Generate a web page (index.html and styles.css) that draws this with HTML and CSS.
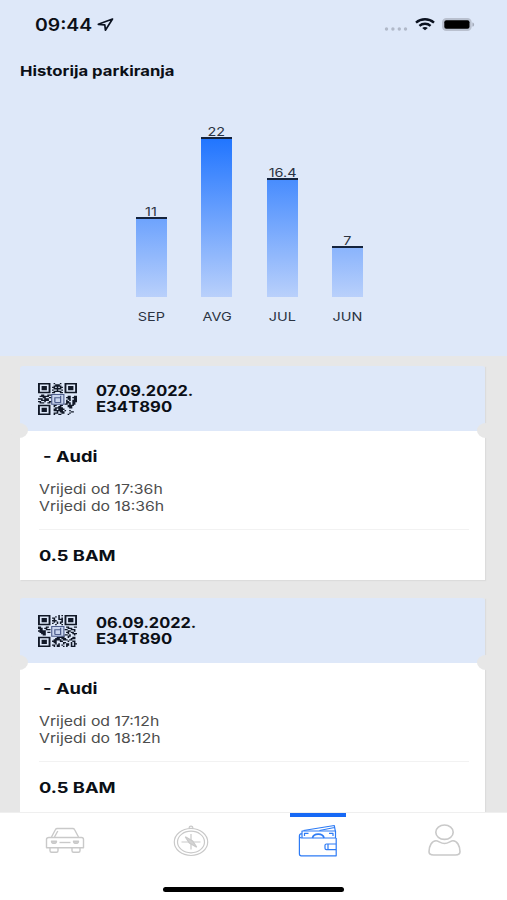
FILE: index.html
```
<!DOCTYPE html>
<html lang="bs">
<head>
    <meta charset="utf-8">
    <title>Historija parkiranja</title>
    <link rel="stylesheet" href="styles.css">
</head>
<body>
    <svg class="defs" width="0" height="0">
        <symbol id="qr-base" viewBox="0 0 25 25" preserveAspectRatio="none">
            <path fill="none" stroke="#111827" stroke-width="1.2" d="M.6 .6h6.8v6.8H.6zM17.6 .6h6.8v6.8h-6.8zM.6 17.6h6.8v6.8H.6z"/>
            <path fill="#111827" d="M2.3 2.3h3.400v3.400h-3.400zM19.3 2.3h3.400v3.400h-3.400zM2.3 19.3h3.400v3.400h-3.400z"/>
        </symbol>
        <symbol id="qr-logo" viewBox="0 0 25 25" preserveAspectRatio="none">
            <path fill="#c9d5ee" stroke="#4d5d8c" stroke-width=".7" d="M8.800 9h7.800v7.600H8.800z"/>
            <path fill="none" stroke="#4d5d8c" stroke-width=".8" d="M10.800 15.200v-3.700h3.700v-1.500M10.800 15.200h3.700v-3.700"/>
        </symbol>
    </svg>

    <div class="screen">
        <header class="top">
            <div class="statusbar">
                <span class="wide clock">09:44</span>
                <svg class="location" width="17" height="15" viewBox="0 0 17 15"><path d="M15.5 2 1.300 7.300l6.500.6.6 5.300z" fill="none" stroke="#0b1220" stroke-width="1.700" stroke-linejoin="round"/></svg>
                <svg class="signal" width="24" height="4" viewBox="0 0 24 4" fill="#b1b9c9"><circle cx="2.5" cy="2" r="1.7"/><circle cx="8.9" cy="2" r="1.7"/><circle cx="15.3" cy="2" r="1.7"/><circle cx="21.5" cy="2" r="1.7"/></svg>
                <svg class="wifi" width="20" height="13" viewBox="0 0 20 13" fill="none" stroke="#0b1220" stroke-width="2.400"><path d="M1 4.6c5-4.400 13-4.400 18 0M4.400 7.800c3.200-2.800 8-2.800 11.200 0"/><path d="M10 12.200 7.200 10c1.600-1.400 4-1.400 5.600 0z" fill="#0b1220" stroke="none"/></svg>
                <svg class="battery" width="33" height="13" viewBox="0 0 33 13"><rect x=".7" y=".7" width="28.3" height="11.6" rx="3.6" fill="#b9c0cf" stroke="#b9c0cf" stroke-width="1.3"/><rect x="2.3" y="2.2" width="25.2" height="8.6" rx="2" fill="#000"/><path d="M30.4 4.400c2.300.5 2.300 3.700 0 4.200z" fill="#a5acbb"/></svg>
            </div>
            <h1 class="title"><span class="wide">Historija parkiranja</span></h1>
            <div class="chart">
                <div class="col"><span class="wide value">11</span><div class="bar" style="height:80px"></div><span class="wide month">SEP</span></div>
                <div class="col"><span class="wide value">22</span><div class="bar" style="height:160px"></div><span class="wide month">AVG</span></div>
                <div class="col"><span class="wide value">16.4</span><div class="bar" style="height:119px"></div><span class="wide month">JUL</span></div>
                <div class="col"><span class="wide value">7</span><div class="bar" style="height:51px"></div><span class="wide month">JUN</span></div>
            </div>
        </header>

        <main class="list">
            <article class="ticket">
                <div class="ticket-head">
                    <svg class="qr" width="39" height="32" viewBox="0 0 25 25" preserveAspectRatio="none">
                        <use href="#qr-base"/>
                        <path stroke="#111827" stroke-width="1" d="M10 .5h1m3 0h1M11 1.5h3M10 2.5h5M9 3.5h2m1 0h1m1 0h2M10 4.5h5M9 5.5h1m2 0h1m2 0h1M10 6.5h5M9 7.5h2m3 0h2M2 9.5h2m2 0h3M1 10.5h6m12 0h2m2 0h2M3 11.5h2m2 0h2m9 0h3m1 0h3M0 12.5h3m1 0h3m12 0h2m2 0h2M2 13.5h5m11 0h1m1 0h1m1 0h3M0 14.5h2m2 0h1m2 0h2m9 0h2m2 0h3M1 15.5h3m2 0h2m10 0h3m1 0h2M17 16.5h2m1 0h1m1 0h2M10 17.5h2m2 0h2m3 0h4M10 18.5h1m2 0h2m4 0h3M11 19.5h5m4 0h2M10 20.5h2m1 0h4M10 21.5h6m1 0h1m2 0h1M12 22.5h1m1 0h3m4 0h2M10 23.5h3m2 0h2m3 0h1M10 24.5h1m2 0h2m4 0h1"/>
                        <use href="#qr-logo"/>
                    </svg>
                    <div class="ticket-id"><span class="wide">07.09.2022.</span><span class="wide plate">E34T890</span></div>
                </div>
                <div class="ticket-body">
                    <i class="notch left"></i><i class="notch right"></i>
                    <h2 class="car"><span class="wide">- Audi</span></h2>
                    <p class="valid"><span class="wide">Vrijedi od 17:36h</span><span class="wide">Vrijedi do 18:36h</span></p>
                    <p class="price"><span class="wide">0.5 BAM</span></p>
                </div>
            </article>

            <article class="ticket">
                <div class="ticket-head">
                    <svg class="qr" width="39" height="32" viewBox="0 0 25 25" preserveAspectRatio="none">
                        <use href="#qr-base"/>
                        <path stroke="#111827" stroke-width="1" d="M13 .5h1m1 0h1M11 1.5h1m1 0h1M9 2.5h2m2 0h1m1 0h1M10 3.5h1m2 0h3M9 4.5h3m3 0h1M10 5.5h1m1 0h1m1 0h2M9 6.5h1m2 0h1m1 0h1M11 7.5h1m3 0h1M0 9.5h2m3 0h2m11 0h2m3 0h2M0 10.5h3m1 0h2m13 0h3M1 11.5h2m2 0h3m9 0h2m2 0h3M0 12.5h5m14 0h2m2 0h1M1 13.5h4m1 0h2m10 0h2m1 0h2M2 14.5h3m14 0h1m2 0h3M3 15.5h2m12 0h2m1 0h1m2 0h1M15 16.5h2m2 0h2M12 17.5h5m2 0h1m2 0h2M11 18.5h3m1 0h3m3 0h3M10 19.5h5m1 0h3m1 0h2M9 20.5h3m2 0h2m3 0h1m2 0h2M10 21.5h2m4 0h2m3 0h1m1 0h1M11 22.5h1m1 0h1m2 0h1m1 0h2m1 0h1m1 0h2M9 23.5h2m1 0h2m1 0h1m2 0h2m1 0h1m1 0h1M10 24.5h1m1 0h2m2 0h1m1 0h1m2 0h3"/>
                        <use href="#qr-logo"/>
                    </svg>
                    <div class="ticket-id"><span class="wide">06.09.2022.</span><span class="wide plate">E34T890</span></div>
                </div>
                <div class="ticket-body">
                    <i class="notch left"></i><i class="notch right"></i>
                    <h2 class="car"><span class="wide">- Audi</span></h2>
                    <p class="valid"><span class="wide">Vrijedi od 17:12h</span><span class="wide">Vrijedi do 18:12h</span></p>
                    <p class="price"><span class="wide">0.5 BAM</span></p>
                </div>
            </article>
        </main>

        <nav class="tabs">
            <div class="tab-row">
                <a class="tab">
                    <svg width="40" height="34" viewBox="0 0 40 34" fill="none" stroke="#c9c9c9" stroke-width="1.4" stroke-linejoin="round">
                        <path d="M6.500 13 10.500 5.500c.4-.8 1-1 1.800-1h15.400c.8 0 1.400.2 1.800 1l4 7.500M9.500 13l3.300-6"/>
                        <path d="M4 13.500h32.500c1.200 0 2 .8 2 2v8.200h-37v-8.200c0-1.200.8-2 2.500-2zM5 23.700v3c0 1 .6 1.500 1.500 1.500h5c1 0 1.500-.5 1.500-1.500v-3M27 23.700v3c0 1 .5 1.500 1.500 1.500h5c1 0 1.500-.5 1.500-1.500v-3"/>
                        <path d="M14.500 18.500h11"/>
                        <path d="M6.500 17.300h5c-.4 2.800-4.600 2.800-5 0zM28.500 17.300h5c-.4 2.800-4.600 2.800-5 0z" fill="#d2d2d2"/>
                    </svg>
                </a>
                <a class="tab">
                    <svg width="40" height="34" viewBox="0 0 40 34" fill="none" stroke="#c9c9c9" stroke-width="1.200">
                        <ellipse cx="20" cy="18" rx="16.700" ry="13.500"/>
                        <ellipse cx="20" cy="18" rx="13.500" ry="10.800"/>
                        <path d="M18.300 4.300c-1-3 4.400-3 3.400 0zM20 10v15.500M10.500 18h19"/>
                        <path d="m14.300 12.800 7.300 4.200 4.100 6.200-7.300-4.200z" fill="#d4d4d4"/>
                    </svg>
                </a>
                <a class="tab active">
                    <svg width="40" height="34" viewBox="0 0 40 34" fill="none" stroke="#2d7bf5" stroke-width="1.200" stroke-linejoin="round">
                        <path d="M38.200 14H3.500C2 14 1.400 13 1.400 12v17.800c0 1.200.6 2 1.800 2h35V14M1.400 12c0-1.600.8-2.200 2.200-2.400M4 14V7h33.500v7"/>
                        <path d="M5.500 6.500 36.300 1.500l1 5.500M21.500 6.500l15-3"/>
                        <path d="M14.500 14c1-5.200 10.500-5.200 11.500 0" stroke-width="1.700"/>
                        <path d="M6.500 12V9.300h4M35 12V9.300h-4"/>
                        <path d="M38 20H28.500c-1 0-1.500.5-1.500 1.300v3c0 .8.500 1.300 1.500 1.300H38M30 20.200v5.200"/>
                    </svg>
                </a>
                <a class="tab">
                    <svg width="40" height="34" viewBox="0 0 40 34" fill="none" stroke="#c9c9c9" stroke-width="1.600" stroke-linejoin="round">
                        <ellipse cx="20.500" cy="8.200" rx="8.700" ry="7.200"/>
                        <path d="M12 16.800c2.400 0 4.500 2.700 8.500 2.700s6.100-2.700 8.500-2.700c4 0 7 4.800 7 11 0 2-1.800 3.200-4.500 3.200h-22c-2.700 0-4.500-1.200-4.500-3.200 0-6.200 3-11 7-11z"/>
                    </svg>
                </a>
            </div>
            <div class="home-indicator"></div>
        </nav>
    </div>
</body>
</html>
```
FILE: styles.css
```
body {
    margin: 0;
    font-family: Inter, "Liberation Sans", sans-serif;
    color: #0b0f16;
    background-color: #e7e7e7;
}

h1, h2, p {
    margin: 0;
}

.defs {
    display: block;
}

.screen {
    display: flex;
    flex-direction: column;
    width: 507px;
    height: 900px;
    overflow: hidden;
}

/* wide letters */
.wide {
    display: inline-block;
    white-space: nowrap;
    transform: scaleX(1.17);
    transform-origin: left center;
}

.top {
    flex: none;
    height: 356px;
    background-color: #dee8f9;
}

.statusbar {
    display: flex;
    align-items: center;
    box-sizing: border-box;
    height: 49px;
    padding: 0 32px 0 35px;
}

.clock {
    width: 62px;
    padding-top: 1px;
    font-size: 17px;
    font-weight: 600;
    transform: scaleX(1.14);
}

.location {
    margin-right: auto;
}

.signal {
    margin: 9px 7px 0 0;
}

.wifi {
    margin-right: 7px;
}

.title {
    padding-left: 20px;
    margin-top: 12px;
    font-size: 13.500px;
    line-height: 20px;
    font-weight: 700;
}

.title .wide {
    transform: scaleX(1.235);
}

.chart {
    display: flex;
    justify-content: center;
    align-items: flex-end;
    gap: 34.5px;
    height: 244px;
    padding-right: 8px;
}

.col {
    display: flex;
    flex-direction: column;
    align-items: center;
    width: 31px;
    font-size: 12px;
    color: #2b3342;
}

.col .wide {
    transform: scaleX(1.2);
    transform-origin: center;
}

.value {
    line-height: 12px;
    margin-bottom: -1px;
}

.bar {
    box-sizing: border-box;
    width: 31px;
    border-top: 2px solid #14233d;
    background: linear-gradient(#1f74ff, #b9d0fb) bottom / 100% 160px no-repeat;
}

.month {
    margin-top: 12px;
    line-height: 16px;
}

.list {
    flex: 1;
    min-height: 0;
    overflow: hidden;
    display: flex;
    flex-direction: column;
    gap: 18px;
    padding: 10px 22px 0 20px;
    background-color: #e7e7e7;
}

.ticket {
    flex: none;
    box-shadow: 1px 1px 1px #dcdcdc;
}

.ticket-head {
    display: flex;
    align-items: center;
    gap: 19px;
    height: 65px;
    box-sizing: border-box;
    padding-left: 18px;
    background-color: #dee8f9;
    border-radius: 3px 3px 0 0;
}

.ticket-id {
    display: flex;
    flex-direction: column;
    padding-top: 1px;
    font-size: 14px;
    line-height: 16.5px;
    font-weight: 700;
}

.plate {
    transform: scaleX(1.19);
}

.ticket-body {
    position: relative;
    height: 149px;
    box-sizing: border-box;
    padding: 16px 16px 0 19px;
    background-color: #fff;
}

/* ticket cut-outs on both sides */
.notch {
    position: absolute;
    top: -8px;
    width: 18px;
    height: 15px;
    border-radius: 50%;
    background-color: #e7e7e7;
}

.left {
    left: -10px;
}

.right {
    right: -10px;
}

.car {
    padding-left: 4px;
    font-size: 15px;
    line-height: 20px;
    font-weight: 700;
}

.car .wide {
    transform: scaleX(1.22);
}

.valid {
    display: flex;
    flex-direction: column;
    padding: 14px 0 15px;
    font-size: 13.5px;
    line-height: 16.5px;
    color: #4d4d4d;
    border-bottom: 1px solid #f2f2f2;
}

.price {
    padding-top: 16px;
    font-size: 15px;
    line-height: 20px;
    font-weight: 700;
}

.price .wide {
    transform: scaleX(1.22);
}

.tabs {
    flex: none;
    box-sizing: border-box;
    height: 88px;
    border-top: 1px solid #efefef;
    background-color: #fff;
}

.tab-row {
    display: flex;
    height: 74px;
    padding-left: 2px;
}

.tab {
    box-sizing: border-box;
    display: flex;
    justify-content: center;
    width: 56px;
    margin: 0 35.2px;
    padding-top: 7px;
    border-top: 4px solid transparent;
}

.active {
    border-color: #1769f5;
}

.home-indicator {
    width: 181px;
    height: 5px;
    margin: 0 auto;
    border-radius: 3px;
    background-color: #000;
}
```
